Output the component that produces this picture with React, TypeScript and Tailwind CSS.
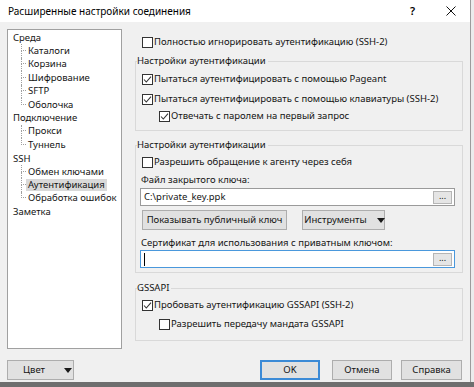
import type { ReactNode } from 'react'

type TreeNode = { label: string; children: string[] }

const tree: TreeNode[] = [
  { label: 'Среда', children: ['Каталоги', 'Корзина', 'Шифрование', 'SFTP', 'Оболочка'] },
  { label: 'Подключение', children: ['Прокси', 'Туннель'] },
  { label: 'SSH', children: ['Обмен ключами', 'Аутентификация', 'Обработка ошибок'] },
  { label: 'Заметка', children: [] },
]

const selected = 'Аутентификация'

function Checkbox({ checked }: { checked: boolean }) {
  return (
    <svg width="11" height="11" viewBox="0 0 11 11" className="shrink-0">
      <rect x="0.5" y="0.5" width="10" height="10" fill="#fff" stroke="#333" />
      {checked && (
        <polyline points="2,5.5 4.3,8 9,2.6" fill="none" stroke="#333" strokeWidth="1.1" />
      )}
    </svg>
  )
}

function CheckRow({
  checked,
  label,
  className = '',
}: {
  checked: boolean
  label: string
  className?: string
}) {
  return (
    <div className={`flex h-[14px] items-center gap-[1px] ${className}`}>
      <Checkbox checked={checked} />
      <span className="whitespace-nowrap leading-[14px]">{label}</span>
    </div>
  )
}

function Caret() {
  return (
    <svg width="8" height="5" viewBox="0 0 8 5" className="shrink-0">
      <path d="M0 0H8L4 5Z" fill="#1a1a1a" />
    </svg>
  )
}

function Group({
  title,
  className = '',
  children,
}: {
  title: string
  className?: string
  children: ReactNode
}) {
  return (
    <fieldset className={`w-[328px] border border-[#d9d9d9] px-[4px] ${className}`}>
      <legend className="ml-[-3px] pr-[2px] leading-[14px]">{title}</legend>
      {children}
    </fieldset>
  )
}

function PathField({ value, focused }: { value?: string; focused?: boolean }) {
  return (
    <div
      className={`flex h-[18px] w-[315px] items-center bg-white pl-[3px] pr-[2px] ${
        focused ? 'border border-[#4a98dc]' : 'border border-[#9a9a9a]'
      }`}
    >
      {value ? (
        <span className="leading-[14px]">{value}</span>
      ) : (
        <span className="h-[13px] w-px bg-black" />
      )}
      <span className="ml-auto flex h-[13px] w-[19px] items-center justify-center border border-[#b5b5b5] bg-[#e5e5e5] pb-[3px] text-[9px] leading-none">
        ...
      </span>
    </div>
  )
}

function WinButton({
  children,
  className = '',
  primary,
}: {
  children: ReactNode
  className?: string
  primary?: boolean
}) {
  return (
    <div
      className={`flex h-[20px] items-center justify-center whitespace-nowrap bg-[#e1e1e1] ${
        primary ? 'border-2 border-[#3b8ad6]' : 'border border-[#adadad]'
      } ${className}`}
    >
      {children}
    </div>
  )
}

function Tree() {
  return (
    <div className="h-[320px] w-[115px] shrink-0 border border-[#a0a0a0] bg-white pl-[3px] pt-[1px]">
      {tree.map((node) => (
        <div key={node.label}>
          <div className="flex h-[13.4px] items-center">
            <span className="px-[2px] leading-[13.4px]">{node.label}</span>
          </div>
          {node.children.map((child, i) => {
            const last = i === node.children.length - 1
            return (
              <div key={child} className="flex h-[13.4px] items-stretch">
                <div className="ml-[10px] flex w-[5px] flex-col">
                  <div className="h-1/2 border-b border-l border-dotted border-[#a0a0a0]" />
                  <div
                    className={
                      last ? 'h-1/2' : 'h-1/2 border-l border-dotted border-[#a0a0a0]'
                    }
                  />
                </div>
                <span
                  className={`self-center whitespace-nowrap px-[2px] leading-[12px] ${
                    child === selected ? 'bg-[#d9d9d9]' : ''
                  }`}
                >
                  {child}
                </span>
              </div>
            )
          })}
        </div>
      ))}
    </div>
  )
}

export default function App() {
  return (
    <div className="flex h-[387px] w-[474px] flex-col overflow-hidden bg-[#ececec] font-['Segoe_UI','Noto_Sans',sans-serif] text-[9.5px] text-[#141414]">
      <div className="h-[382px] w-[471px] shrink-0 border-r border-[#9c9c9c] bg-[#f0f0f0]">
        {/* title bar */}
        <div className="flex h-[22px] items-center bg-white pl-[8px] text-[10px] text-black">
          <span className="whitespace-nowrap">Расширенные настройки соединения</span>
          <span className="ml-auto mr-[31px] text-[11px] font-semibold">?</span>
          <svg width="10" height="10" viewBox="0 0 10 10" className="mr-[14px]">
            <path d="M0.5 0.5L9.5 9.5M9.5 0.5L0.5 9.5" stroke="#111" strokeWidth="1" />
          </svg>
        </div>

        <div className="flex items-start">
          <div className="ml-[7px] mt-[7px]">
            <Tree />
          </div>

          <div className="ml-[13px] flex flex-col">
            <CheckRow
              checked={false}
              label="Полностью игнорировать аутентификацию (SSH-2)"
              className="ml-[7px] mt-[13px]"
            />

            <Group title="Настройки аутентификации" className="mt-[5px] pb-[7px]">
              <CheckRow
                checked
                label="Пытаться аутентифицировать с помощью Pageant"
                className="ml-[2px] mt-[4px]"
              />
              <CheckRow
                checked
                label="Пытаться аутентифицировать с помощью клавиатуры (SSH-2)"
                className="ml-[2px] mt-[6px]"
              />
              <CheckRow
                checked
                label="Отвечать с паролем на первый запрос"
                className="ml-[19px] mt-[3px]"
              />
            </Group>

            <Group title="Настройки аутентификации" className="mt-[7px] pb-[4px]">
              <CheckRow
                checked={false}
                label="Разрешить обращение к агенту через себя"
                className="ml-[2px] mt-[3px]"
              />
              <div className="ml-[1px] mt-[4px] h-[14px] leading-[14px]">Файл закрытого ключа:</div>
              <div className="mt-[1px]">
                <PathField value="C:\private_key.ppk" />
              </div>
              <div className="mt-[4px] flex gap-[15px]">
                <WinButton className="ml-[2px] w-[145px]">Показывать публичный ключ</WinButton>
                <WinButton className="w-[83px] gap-[10px] pl-[2px]">
                  <span>Инструменты</span>
                  <Caret />
                </WinButton>
              </div>
              <div className="ml-[1px] mt-[6px] h-[14px] leading-[14px]">
                Сертификат для использования с приватным ключом:
              </div>
              <PathField focused />
            </Group>

            <Group title="GSSAPI" className="mt-[8px] pb-[9px]">
              <CheckRow
                checked
                label="Пробовать аутентификацию GSSAPI (SSH-2)"
                className="ml-[2px] mt-[3px]"
              />
              <CheckRow
                checked={false}
                label="Разрешить передачу мандата GSSAPI"
                className="ml-[19px] mt-[5px]"
              />
            </Group>
          </div>
        </div>

        {/* bottom buttons */}
        <div className="mt-[11px] flex items-center">
          <WinButton className="ml-[7px] w-[67px] justify-start pl-[15px]">
            <span>Цвет</span>
            <span className="ml-[19px]">
              <Caret />
            </span>
          </WinButton>
          <WinButton primary className="ml-[186px] w-[60px]">
            OK
          </WinButton>
          <WinButton className="ml-[12px] w-[60px]">Отмена</WinButton>
          <WinButton className="ml-[9px] w-[61px]">Справка</WinButton>
        </div>
      </div>
      <div className="h-[5px] w-full bg-[#6e6e6e]" />
    </div>
  )
}
